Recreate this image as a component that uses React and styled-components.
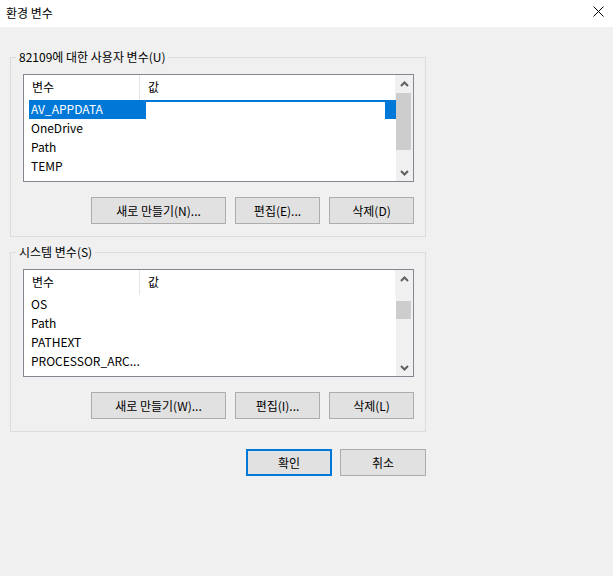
import styled, { createGlobalStyle } from 'styled-components'

const GlobalStyle = createGlobalStyle`
  html, body {
    margin: 0;
    background: #f0f0f0;
  }
  body {
    font-family: "Noto Sans CJK KR", "Noto Sans", sans-serif;
    font-size: 12px;
    color: #000;
  }
`

const userVars = ['AV_APPDATA', 'OneDrive', 'Path', 'TEMP', '']
const systemVars = ['OS', 'Path', 'PATHEXT', 'PROCESSOR_ARC...', '']

const ScrollBar = ({ thumbTop, thumbHeight }) => (
  <Track>
    <Arrow>
      <svg width="9" height="6" viewBox="0 0 9 6">
        <polyline points="1,5 4.5,1.5 8,5" fill="none" stroke="#606060" strokeWidth="2" />
      </svg>
    </Arrow>
    <ThumbArea>
      <Thumb $top={thumbTop} $height={thumbHeight} />
    </ThumbArea>
    <Arrow>
      <svg width="9" height="6" viewBox="0 0 9 6">
        <polyline points="1,1 4.5,4.5 8,1" fill="none" stroke="#606060" strokeWidth="2" />
      </svg>
    </Arrow>
  </Track>
)

const VarList = ({ rows, selected, thumbTop, thumbHeight }) => (
  <ListBox>
    <ListBody>
      <Header>
        <HeadCell $width={116}>변수</HeadCell>
        <HeadCell $last>값</HeadCell>
      </Header>
      {rows.map((name, i) => (
        <Row key={i}>
          <NameCell $selected={selected === i}>{name}</NameCell>
          <ValueCell $selected={selected === i} />
        </Row>
      ))}
    </ListBody>
    <ScrollBar thumbTop={thumbTop} thumbHeight={thumbHeight} />
  </ListBox>
)

const App = () => (
  <>
    <GlobalStyle />
    <TitleBar>
      <span>환경 변수</span>
      <svg width="11" height="11" viewBox="0 0 11 11">
        <path d="M0.5 0.5 L10.5 10.5 M10.5 0.5 L0.5 10.5" stroke="#000" strokeWidth="1" />
      </svg>
    </TitleBar>
    <Content>
      <Group>
        <Legend>82109에 대한 사용자 변수(U)</Legend>
        <VarList rows={userVars} selected={0} thumbTop={1} thumbHeight={57} />
        <ButtonRow>
          <Button $width={135}>새로 만들기(N)...</Button>
          <Button $width={85}>편집(E)...</Button>
          <Button $width={85}>삭제(D)</Button>
        </ButtonRow>
      </Group>
      <Group>
        <Legend>시스템 변수(S)</Legend>
        <VarList rows={systemVars} selected={-1} thumbTop={14} thumbHeight={18} />
        <ButtonRow>
          <Button $width={135}>새로 만들기(W)...</Button>
          <Button $width={85}>편집(I)...</Button>
          <Button $width={85}>삭제(L)</Button>
        </ButtonRow>
      </Group>
      <Footer>
        <Button $width={86} $primary>확인</Button>
        <Button $width={86}>취소</Button>
      </Footer>
    </Content>
  </>
)

export default App

const TitleBar = styled.div`
  height: 27px;
  background: #fff;
  display: flex;
  align-items: center;
  justify-content: space-between;
  padding: 0 9px 2px 6px;
  box-sizing: border-box;
  line-height: 16px;

  svg {
    margin-top: -3px;
  }
`

const Content = styled.div`
  padding: 22px 0 0 10px;
  width: 416px;
  height: 549px;
  box-sizing: content-box;
`

const Group = styled.fieldset`
  margin: 0 0 7px;
  padding: 9px 11px 12px 12px;
  border: 1px solid #dcdcdc;
  min-width: 0;
`

const Legend = styled.legend`
  margin-left: -7px;
  padding: 0 3px;
  line-height: 16px;
  font-size: 12px;
`

const ListBox = styled.div`
  display: flex;
  height: 106px;
  border: 1px solid #828790;
  background: #fff;
  overflow: hidden;
`

const ListBody = styled.div`
  flex: 1;
  min-width: 0;
`

const Header = styled.div`
  display: flex;
  height: 25px;
`

const HeadCell = styled.div`
  ${(p) => (p.$width ? `width: ${p.$width}px;` : 'flex: 1;')}
  padding-left: 8px;
  line-height: 24px;
  box-sizing: border-box;
  border-right: 1px solid ${(p) => (p.$last ? '#f0f0f0' : '#e5e5e5')};
`

const Row = styled.div`
  display: flex;
  height: 19px;
  padding-left: 5px;
`

const NameCell = styled.div`
  width: 117px;
  padding-left: 2px;
  line-height: 17px;
  white-space: nowrap;
  box-sizing: border-box;
  background: ${(p) => (p.$selected ? '#0078d7' : 'transparent')};
  color: ${(p) => (p.$selected ? '#fff' : '#000')};
`

const ValueCell = styled.div`
  flex: 1;
  border-top: 2px solid ${(p) => (p.$selected ? '#0078d7' : 'transparent')};
  box-shadow: ${(p) => (p.$selected ? 'inset -11px 0 0 #0078d7' : 'none')};
`

const Track = styled.div`
  width: 17px;
  display: flex;
  flex-direction: column;
  background: #f0f0f0;
`

const Arrow = styled.div`
  height: 17px;
  display: flex;
  align-items: center;
  justify-content: center;
  padding-right: 1px;
`

const ThumbArea = styled.div`
  flex: 1;
  display: flex;
  flex-direction: column;
`

const Thumb = styled.div`
  margin-top: ${(p) => p.$top}px;
  height: ${(p) => p.$height}px;
  width: 15px;
  background: #cdcdcd;
`

const ButtonRow = styled.div`
  display: flex;
  justify-content: flex-end;
  gap: 9px;
  margin-top: 15px;
  padding-right: 0;
`

const Button = styled.button`
  width: ${(p) => p.$width}px;
  height: 27px;
  padding: 0;
  box-sizing: border-box;
  background: #e1e1e1;
  border: ${(p) => (p.$primary ? '2px solid #0078d7' : '1px solid #adadad')};
  font-family: inherit;
  font-size: 12px;
  color: #000;
  line-height: 16px;
`

const Footer = styled.div`
  display: flex;
  justify-content: flex-end;
  gap: 8px;
  margin-top: 17px;
`
